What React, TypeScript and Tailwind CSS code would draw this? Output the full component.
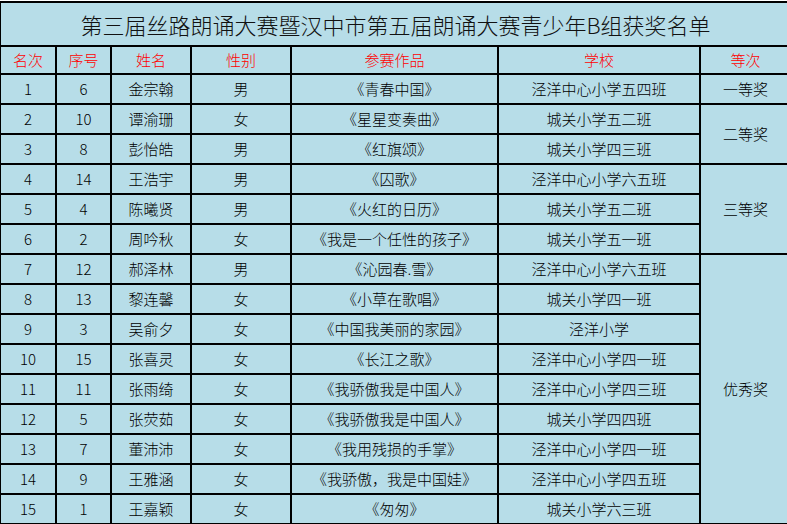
import React from "react";

type Row = {
  rank: number;
  no: number;
  name: string;
  sex: string;
  work: string;
  school: string;
  award?: string;
  span?: number;
};

const rows: Row[] = [
  { rank: 1, no: 6, name: "金宗翰", sex: "男", work: "《青春中国》", school: "泾洋中心小学五四班", award: "一等奖", span: 1 },
  { rank: 2, no: 10, name: "谭渝珊", sex: "女", work: "《星星变奏曲》", school: "城关小学五二班", award: "二等奖", span: 2 },
  { rank: 3, no: 8, name: "彭怡皓", sex: "男", work: "《红旗颂》", school: "城关小学四三班" },
  { rank: 4, no: 14, name: "王浩宇", sex: "男", work: "《囚歌》", school: "泾洋中心小学六五班", award: "三等奖", span: 3 },
  { rank: 5, no: 4, name: "陈曦贤", sex: "男", work: "《火红的日历》", school: "城关小学五二班" },
  { rank: 6, no: 2, name: "周吟秋", sex: "女", work: "《我是一个任性的孩子》", school: "城关小学五一班" },
  { rank: 7, no: 12, name: "郝泽林", sex: "男", work: "《沁园春.雪》", school: "泾洋中心小学六五班", award: "优秀奖", span: 9 },
  { rank: 8, no: 13, name: "黎连馨", sex: "女", work: "《小草在歌唱》", school: "城关小学四一班" },
  { rank: 9, no: 3, name: "吴俞夕", sex: "女", work: "《中国我美丽的家园》", school: "泾洋小学" },
  { rank: 10, no: 15, name: "张喜灵", sex: "女", work: "《长江之歌》", school: "泾洋中心小学四一班" },
  { rank: 11, no: 11, name: "张雨绮", sex: "女", work: "《我骄傲我是中国人》", school: "泾洋中心小学四三班" },
  { rank: 12, no: 5, name: "张荧茹", sex: "女", work: "《我骄傲我是中国人》", school: "城关小学四四班" },
  { rank: 13, no: 7, name: "董沛沛", sex: "女", work: "《我用残损的手掌》", school: "泾洋中心小学四一班" },
  { rank: 14, no: 9, name: "王雅涵", sex: "女", work: "《我骄傲，我是中国娃》", school: "泾洋中心小学四五班" },
  { rank: 15, no: 1, name: "王嘉颖", sex: "女", work: "《匆匆》", school: "城关小学六三班" },
];

const headers = ["名次", "序号", "姓名", "性别", "参赛作品", "学校", "等次"];

const cell = "border-2 border-black text-center align-middle p-0 whitespace-nowrap";

export default function App() {
  return (
    <div
      className="w-[787px] h-[524px] overflow-hidden bg-white pt-px font-light"
      style={{ fontFamily: '"Noto Sans CJK SC", "Noto Sans", sans-serif' }}
    >
      <table className="w-[791px] table-fixed border-collapse bg-[#b7dde8] text-[15px] text-black -ml-px">
        <colgroup>
          <col className="w-[56px]" />
          <col className="w-[55px]" />
          <col className="w-[80px]" />
          <col className="w-[100px]" />
          <col className="w-[207px]" />
          <col className="w-[202px]" />
          <col className="w-[91px]" />
        </colgroup>
        <tbody>
          <tr className="h-[44px]">
            <td colSpan={7} className={`${cell} text-[22px] text-[#111]`}>
              第三届丝路朗诵大赛暨汉中市第五届朗诵大赛青少年B组获奖名单
            </td>
          </tr>
          <tr className="h-[28px]">
            {headers.map((h) => (
              <td key={h} className={`${cell} text-[#ff0000]`}>
                {h}
              </td>
            ))}
          </tr>
          {rows.map((r) => (
            <tr key={r.rank} className="h-[30px]">
              <td className={cell}>{r.rank}</td>
              <td className={cell}>{r.no}</td>
              <td className={cell}>{r.name}</td>
              <td className={cell}>{r.sex}</td>
              <td className={cell}>{r.work}</td>
              <td className={cell}>{r.school}</td>
              {r.award && (
                <td rowSpan={r.span} className={cell}>
                  {r.award}
                </td>
              )}
            </tr>
          ))}
        </tbody>
      </table>
    </div>
  );
}
